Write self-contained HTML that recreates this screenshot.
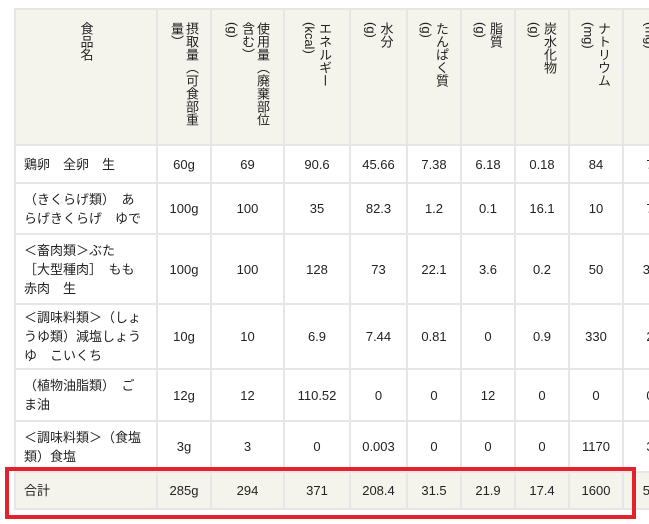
<!DOCTYPE html>
<html><head><meta charset="utf-8"><style>
html,body{margin:0;padding:0;background:#fff;width:649px;height:524px;overflow:hidden;}
.wrap{position:absolute;left:0;top:0;width:649px;height:524px;overflow:hidden;}
table{position:absolute;left:14px;top:8px;border-collapse:collapse;table-layout:fixed;width:662px;
font-family:"Liberation Sans","Noto Sans CJK JP",sans-serif;font-size:13px;color:#222;}
td,th{border:2px solid #e6e6e6;padding:0;}
th{background:#f4f3ec;font-weight:normal;vertical-align:top;height:134px;}
th div{writing-mode:vertical-rl;margin:12px auto 0;text-align:left;line-height:15px;font-size:13px;}
td{text-align:center;vertical-align:middle;}
td.f{text-align:left;padding:0 11px 0 8px;line-height:19px;}
tr.t td{background:#f4f3ec;}
.box{position:absolute;left:5px;top:467px;width:623px;height:44px;border:4px solid #e3222b;}
</style></head><body><div class="wrap">
<table>
<colgroup><col style="width:142px"><col style="width:54px"><col style="width:73px"><col style="width:66px"><col style="width:57px"><col style="width:54px"><col style="width:54px"><col style="width:54px"><col style="width:54px"><col style="width:54px"></colgroup>
<tr><th><div>食品名</div></th><th><div style="height:120px">摂取量（可食部重<br>量）</div></th><th><div style="height:120px">使用量（廃棄部位<br>含む）<br>(g)</div></th><th><div style="height:90px">エネルギー<br>(kcal)</div></th><th><div style="height:40px">水分<br>(g)</div></th><th><div style="height:80px">たんぱく質<br>(g)</div></th><th><div style="height:40px">脂質<br>(g)</div></th><th><div style="height:60px">炭水化物<br>(g)</div></th><th><div style="height:80px">ナトリウム<br>(mg)</div></th><th><div style="height:30px">(mg)</div></th></tr>
<tr style="height:38px"><td class="f">鶏卵　全卵　生</td><td>60g</td><td>69</td><td>90.6</td><td>45.66</td><td>7.38</td><td>6.18</td><td>0.18</td><td>84</td><td>7</td></tr>
<tr style="height:51px"><td class="f">（きくらげ類）　あらげきくらげ　ゆで</td><td>100g</td><td>100</td><td>35</td><td>82.3</td><td>1.2</td><td>0.1</td><td>16.1</td><td>10</td><td>7</td></tr>
<tr style="height:70px"><td class="f">＜畜肉類＞ぶた　［大型種肉］　もも　赤肉　生</td><td>100g</td><td>100</td><td>128</td><td>73</td><td>22.1</td><td>3.6</td><td>0.2</td><td>50</td><td>37</td></tr>
<tr style="height:65px"><td class="f">＜調味料類＞（しょうゆ類）減塩しょうゆ　こいくち</td><td>10g</td><td>10</td><td>6.9</td><td>7.44</td><td>0.81</td><td>0</td><td>0.9</td><td>330</td><td>2</td></tr>
<tr style="height:52px"><td class="f">（植物油脂類）　ごま油</td><td>12g</td><td>12</td><td>110.52</td><td>0</td><td>0</td><td>12</td><td>0</td><td>0</td><td>0</td></tr>
<tr style="height:51px"><td class="f">＜調味料類＞（食塩類）食塩</td><td>3g</td><td>3</td><td>0</td><td>0.003</td><td>0</td><td>0</td><td>0</td><td>1170</td><td>3</td></tr>
<tr class="t" style="height:37px"><td class="f">合計</td><td>285g</td><td>294</td><td>371</td><td>208.4</td><td>31.5</td><td>21.9</td><td>17.4</td><td>1600</td><td>55</td></tr>
</table>
<div class="box"></div>
</div></body></html>
